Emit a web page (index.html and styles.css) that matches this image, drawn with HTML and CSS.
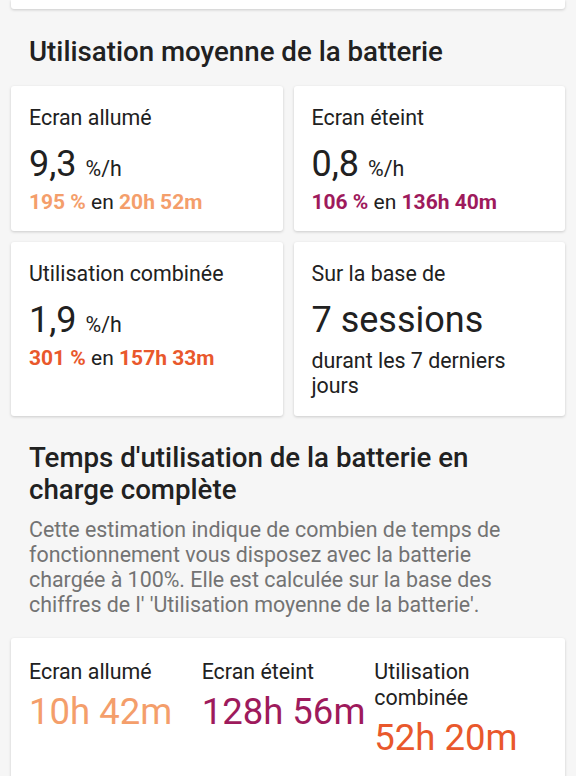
FILE: index.html
```html
<!DOCTYPE html>
<html lang="fr">
<head>
    <meta charset="UTF-8">
    <meta name="viewport" content="width=device-width, initial-scale=1.0">
    <title>Utilisation de la batterie</title>
    <link rel="stylesheet" href="styles.css">
</head>
<body>

<div class="card card-top"></div>

<!-- Utilisation moyenne -->
<h2 class="section-title">Utilisation moyenne de la batterie</h2>

<div class="stats-grid">
    <div class="card stat">
        <div class="stat-label">Ecran allumé</div>
        <div class="stat-value">9,3 <span class="unit">%/h</span></div>
        <div class="stat-detail"><b class="c-on">195 %</b> en <b class="c-on">20h 52m</b></div>
    </div>
    <div class="card stat">
        <div class="stat-label">Ecran éteint</div>
        <div class="stat-value">0,8 <span class="unit">%/h</span></div>
        <div class="stat-detail"><b class="c-off">106 %</b> en <b class="c-off">136h 40m</b></div>
    </div>
    <div class="card stat">
        <div class="stat-label">Utilisation combinée</div>
        <div class="stat-value">1,9 <span class="unit">%/h</span></div>
        <div class="stat-detail"><b class="c-all">301 %</b> en <b class="c-all">157h 33m</b></div>
    </div>
    <div class="card stat">
        <div class="stat-label">Sur la base de</div>
        <div class="stat-value">7 sessions</div>
        <div class="stat-note">durant les 7 derniers jours</div>
    </div>
</div>

<!-- Temps en charge complète -->
<h2 class="section-title section-title-2">Temps d'utilisation de la batterie en charge complète</h2>
<p class="section-desc">Cette estimation indique de combien de temps de fonctionnement vous disposez avec la batterie chargée à 100%. Elle est calculée sur la base des chiffres de l' 'Utilisation moyenne de la batterie'.</p>

<div class="card runtime">
    <div class="runtime-col">
        <div class="stat-label">Ecran allumé</div>
        <div class="runtime-value c-on">10h 42m</div>
    </div>
    <div class="runtime-col">
        <div class="stat-label">Ecran éteint</div>
        <div class="runtime-value c-off">128h 56m</div>
    </div>
    <div class="runtime-col">
        <div class="stat-label">Utilisation combinée</div>
        <div class="runtime-value c-all">52h 20m</div>
    </div>
</div>

</body>
</html>
```

FILE: styles.css
```css
/* General */
body {
    font-family: Roboto, "Noto Sans", sans-serif;
    margin: 0;
    padding: 0 11px;
    background-color: #f6f6f6;
    color: #212121;
}

.card {
    background: #fff;
    border-radius: 3px;
    box-shadow: 0 1px 3px rgba(0, 0, 0, 0.18);
}
.card-top {
    height: 9px;
    border-radius: 0 0 3px 3px;
}

/* Titles */
.section-title {
    font-size: 27.7px;
    font-weight: 500;
    line-height: 32px;
    margin: 27px 18px 0 18px;
}
.section-title-2 {
    margin-top: 25.5px;
}
.section-desc {
    color: #737373;
    font-size: 21.4px;
    line-height: 25px;
    margin: 11px 18px 0 18px;
}

/* Grid of stats */
.stats-grid {
    display: grid;
    grid-template-columns: 1fr 1fr;
    gap: 11px;
    margin-top: 18px;
}
.stat {
    padding: 19px 18px 16px 18px;
}
.stat-label {
    font-size: 21.4px;
    line-height: 26px;
}
.stat-value {
    font-size: 36px;
    line-height: 44px;
    margin-top: 11px;
}
.unit {
    font-size: 21.4px;
    line-height: 1;
}
.stat-detail {
    font-size: 21px;
    line-height: 26px;
    margin-top: 3px;
}
.stat-detail b {
    font-weight: 700;
}
.stat-note {
    font-size: 21.4px;
    line-height: 24.5px;
    margin: 7px 0 2px 0;
}

/* Colors */
.c-on {
    color: #f49e6b;
}
.c-off {
    color: #9e1a5c;
}
.c-all {
    color: #e9582c;
}

/* Runtime card */
.runtime {
    display: grid;
    grid-template-columns: repeat(3, 1fr);
    padding: 21px 18px 30px 18px;
    margin-top: 21px;
}
.runtime-value {
    font-size: 36.5px;
    line-height: 46px;
    margin-top: 4px;
    white-space: nowrap;
}
```
